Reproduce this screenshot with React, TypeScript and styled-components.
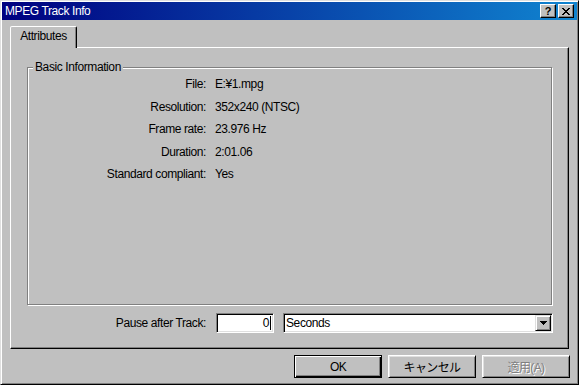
import React from 'react';
import styled, { createGlobalStyle } from 'styled-components';

const GlobalStyle = createGlobalStyle`
  html, body {
    margin: 0;
    padding: 0;
    background: #c0c0c0;
  }
  body {
    font-family: "Liberation Sans", Arial, "Noto Sans CJK JP", sans-serif;
    font-size: 12px;
    letter-spacing: -0.4px;
    color: #000;
  }
`;

const Window = styled.div`
  width: 579px;
  height: 385px;
  box-sizing: border-box;
  background: #c0c0c0;
  border-style: solid;
  border-width: 1px;
  border-color: #dfdfdf #000 #000 #dfdfdf;
  box-shadow: inset 1px 1px 0 #fff, inset -1px -1px 0 #808080;
  padding: 1px;
  display: flex;
  flex-direction: column;
`;

const TitleBar = styled.div`
  height: 18px;
  flex: none;
  display: flex;
  align-items: center;
  justify-content: space-between;
  padding: 0 3px 0 3px;
  background: linear-gradient(to right, #000080, #1084d0);
  color: #fff;
  font-size: 12px;
`;

const TitleText = styled.span`
  line-height: 18px;
`;

const TitleButtons = styled.div`
  display: flex;
  gap: 2px;
`;

const TitleButton = styled.div`
  width: 16px;
  height: 14px;
  box-sizing: border-box;
  background: #c0c0c0;
  border-style: solid;
  border-width: 1px;
  border-color: #fff #000 #000 #fff;
  box-shadow: inset -1px -1px 0 #808080;
  display: flex;
  align-items: center;
  justify-content: center;
  color: #000;
  font-weight: bold;
  font-size: 11px;
  line-height: 12px;
  letter-spacing: 0;
`;

const Body = styled.div`
  flex: 1;
  display: flex;
  flex-direction: column;
  padding: 6px 8px 0 8px;
`;

const TabStrip = styled.div`
  display: flex;
  height: 21px;
`;

const Tab = styled.div`
  width: 67px;
  height: 22px;
  box-sizing: border-box;
  background: #c0c0c0;
  border-style: solid;
  border-width: 1px 1px 0 1px;
  border-color: #fff #000 transparent #fff;
  border-radius: 2px 2px 0 0;
  box-shadow: inset -1px 0 0 #808080;
  position: relative;
  z-index: 1;
  text-align: center;
  line-height: 19px;
`;

const Panel = styled.div`
  width: 559px;
  height: 302px;
  box-sizing: border-box;
  border-style: solid;
  border-width: 1px;
  border-color: #fff #000 #000 #fff;
  box-shadow: inset -1px -1px 0 #808080;
  padding: 0 15px 0 16px;
  display: flex;
  flex-direction: column;
`;

const Group = styled.fieldset`
  margin: 13px 0 0 0;
  padding: 0;
  width: 525px;
  height: 244px;
  box-sizing: border-box;
  border: 1px solid #808080;
  box-shadow: 1px 1px 0 #fff, inset 1px 1px 0 #fff;
  min-inline-size: 0;
`;

const Legend = styled.legend`
  margin-left: 5px;
  padding: 0 2px;
  background: #c0c0c0;
  line-height: 12px;
`;

const InfoGrid = styled.div`
  display: grid;
  grid-template-columns: 178px 1fr;
  grid-auto-rows: 22.5px;
  column-gap: 9px;
  align-items: center;
`;

const Label = styled.span`
  text-align: right;
  white-space: nowrap;
`;

const Value = styled.span`
  white-space: nowrap;
`;

const PauseRow = styled.div`
  display: flex;
  align-items: center;
  margin-top: 8px;
  height: 20px;
`;

const PauseLabel = styled.span`
  width: 179px;
  text-align: right;
  margin-right: 10px;
  white-space: nowrap;
`;

const Field = styled.div<{ $width: number; $gap?: number }>`
  width: ${p => p.$width}px;
  height: 20px;
  margin-left: ${p => p.$gap ?? 0}px;
  box-sizing: border-box;
  background: #fff;
  border-style: solid;
  border-width: 1px;
  border-color: #808080 #fff #fff #808080;
  box-shadow: inset 1px 1px 0 #000, inset -1px -1px 0 #dfdfdf;
  display: flex;
  align-items: center;
`;

const NumberText = styled.span`
  flex: 1;
  padding-right: 2px;
  line-height: 16px;
  display: flex;
  justify-content: flex-end;
  align-items: center;
`;

const Caret = styled.span`
  display: inline-block;
  width: 1px;
  height: 14px;
  background: #000;
  margin-left: 1px;
`;

const SelectText = styled.span`
  flex: 1;
  padding-left: 2px;
  line-height: 16px;
`;

const DropButton = styled.div`
  width: 16px;
  height: 16px;
  margin-right: 1px;
  box-sizing: border-box;
  background: #c0c0c0;
  border-style: solid;
  border-width: 1px;
  border-color: #dfdfdf #000 #000 #dfdfdf;
  box-shadow: inset 1px 1px 0 #fff, inset -1px -1px 0 #808080;
  display: flex;
  align-items: center;
  justify-content: center;
`;

const ButtonRow = styled.div`
  display: flex;
  justify-content: flex-end;
  gap: 6px;
  margin-top: 6px;
  margin-right: -1px;
`;

const Button = styled.div<{ $default?: boolean; $disabled?: boolean }>`
  width: 88px;
  height: 23px;
  box-sizing: border-box;
  background: #c0c0c0;
  border: 1px solid #000;
  border-color: ${p => (p.$default ? '#000' : '#fff #000 #000 #fff')};
  box-shadow: ${p =>
    p.$default
      ? 'inset 1px 1px 0 #fff, inset -1px -1px 0 #000, inset -2px -2px 0 #808080'
      : 'inset 1px 1px 0 #dfdfdf, inset -1px -1px 0 #808080'};
  display: flex;
  align-items: center;
  justify-content: center;
  color: ${p => (p.$disabled ? '#808080' : '#000')};
  text-shadow: ${p => (p.$disabled ? '1px 1px 0 #fff' : 'none')};
  font-family: "Liberation Sans", "Noto Sans CJK JP", sans-serif;
  font-size: 12px;
  letter-spacing: -0.6px;
`;

const rows: [string, string][] = [
  ['File:', 'E:¥1.mpg'],
  ['Resolution:', '352x240 (NTSC)'],
  ['Frame rate:', '23.976 Hz'],
  ['Duration:', '2:01.06'],
  ['Standard compliant:', 'Yes'],
];

const App = (): React.ReactElement => {
  return (
    <>
      <GlobalStyle />
      <Window>
        <TitleBar>
          <TitleText>MPEG Track Info</TitleText>
          <TitleButtons>
            <TitleButton>?</TitleButton>
            <TitleButton>
              <svg width="8" height="7" viewBox="0 0 8 7" shapeRendering="crispEdges">
                <path d="M0 0h2v1h-2zM6 0h2v1h-2zM1 1h2v1h-2zM5 1h2v1h-2zM2 2h4v1h-4zM3 3h2v1h-2zM2 4h4v1h-4zM1 5h2v1h-2zM5 5h2v1h-2zM0 6h2v1h-2zM6 6h2v1h-2z" fill="#000" />
              </svg>
            </TitleButton>
          </TitleButtons>
        </TitleBar>
        <Body>
          <TabStrip>
            <Tab>Attributes</Tab>
          </TabStrip>
          <Panel>
            <Group>
              <Legend>Basic Information</Legend>
              <InfoGrid>
                {rows.map(([k, v]) => (
                  <React.Fragment key={k}>
                    <Label>{k}</Label>
                    <Value>{v}</Value>
                  </React.Fragment>
                ))}
              </InfoGrid>
            </Group>
            <PauseRow>
              <PauseLabel>Pause after Track:</PauseLabel>
              <Field $width={58}>
                <NumberText>0<Caret /></NumberText>
              </Field>
              <Field $width={270} $gap={9}>
                <SelectText>Seconds</SelectText>
                <DropButton>
                  <svg width="7" height="4" viewBox="0 0 7 4" shapeRendering="crispEdges">
                    <path d="M0 0h7v1h-7zM1 1h5v1h-5zM2 2h3v1h-3zM3 3h1v1h-1z" fill="#000" />
                  </svg>
                </DropButton>
              </Field>
            </PauseRow>
          </Panel>
          <ButtonRow>
            <Button $default>OK</Button>
            <Button>キャンセル</Button>
            <Button $disabled>適用(A)</Button>
          </ButtonRow>
        </Body>
      </Window>
    </>
  );
};

export default App;
